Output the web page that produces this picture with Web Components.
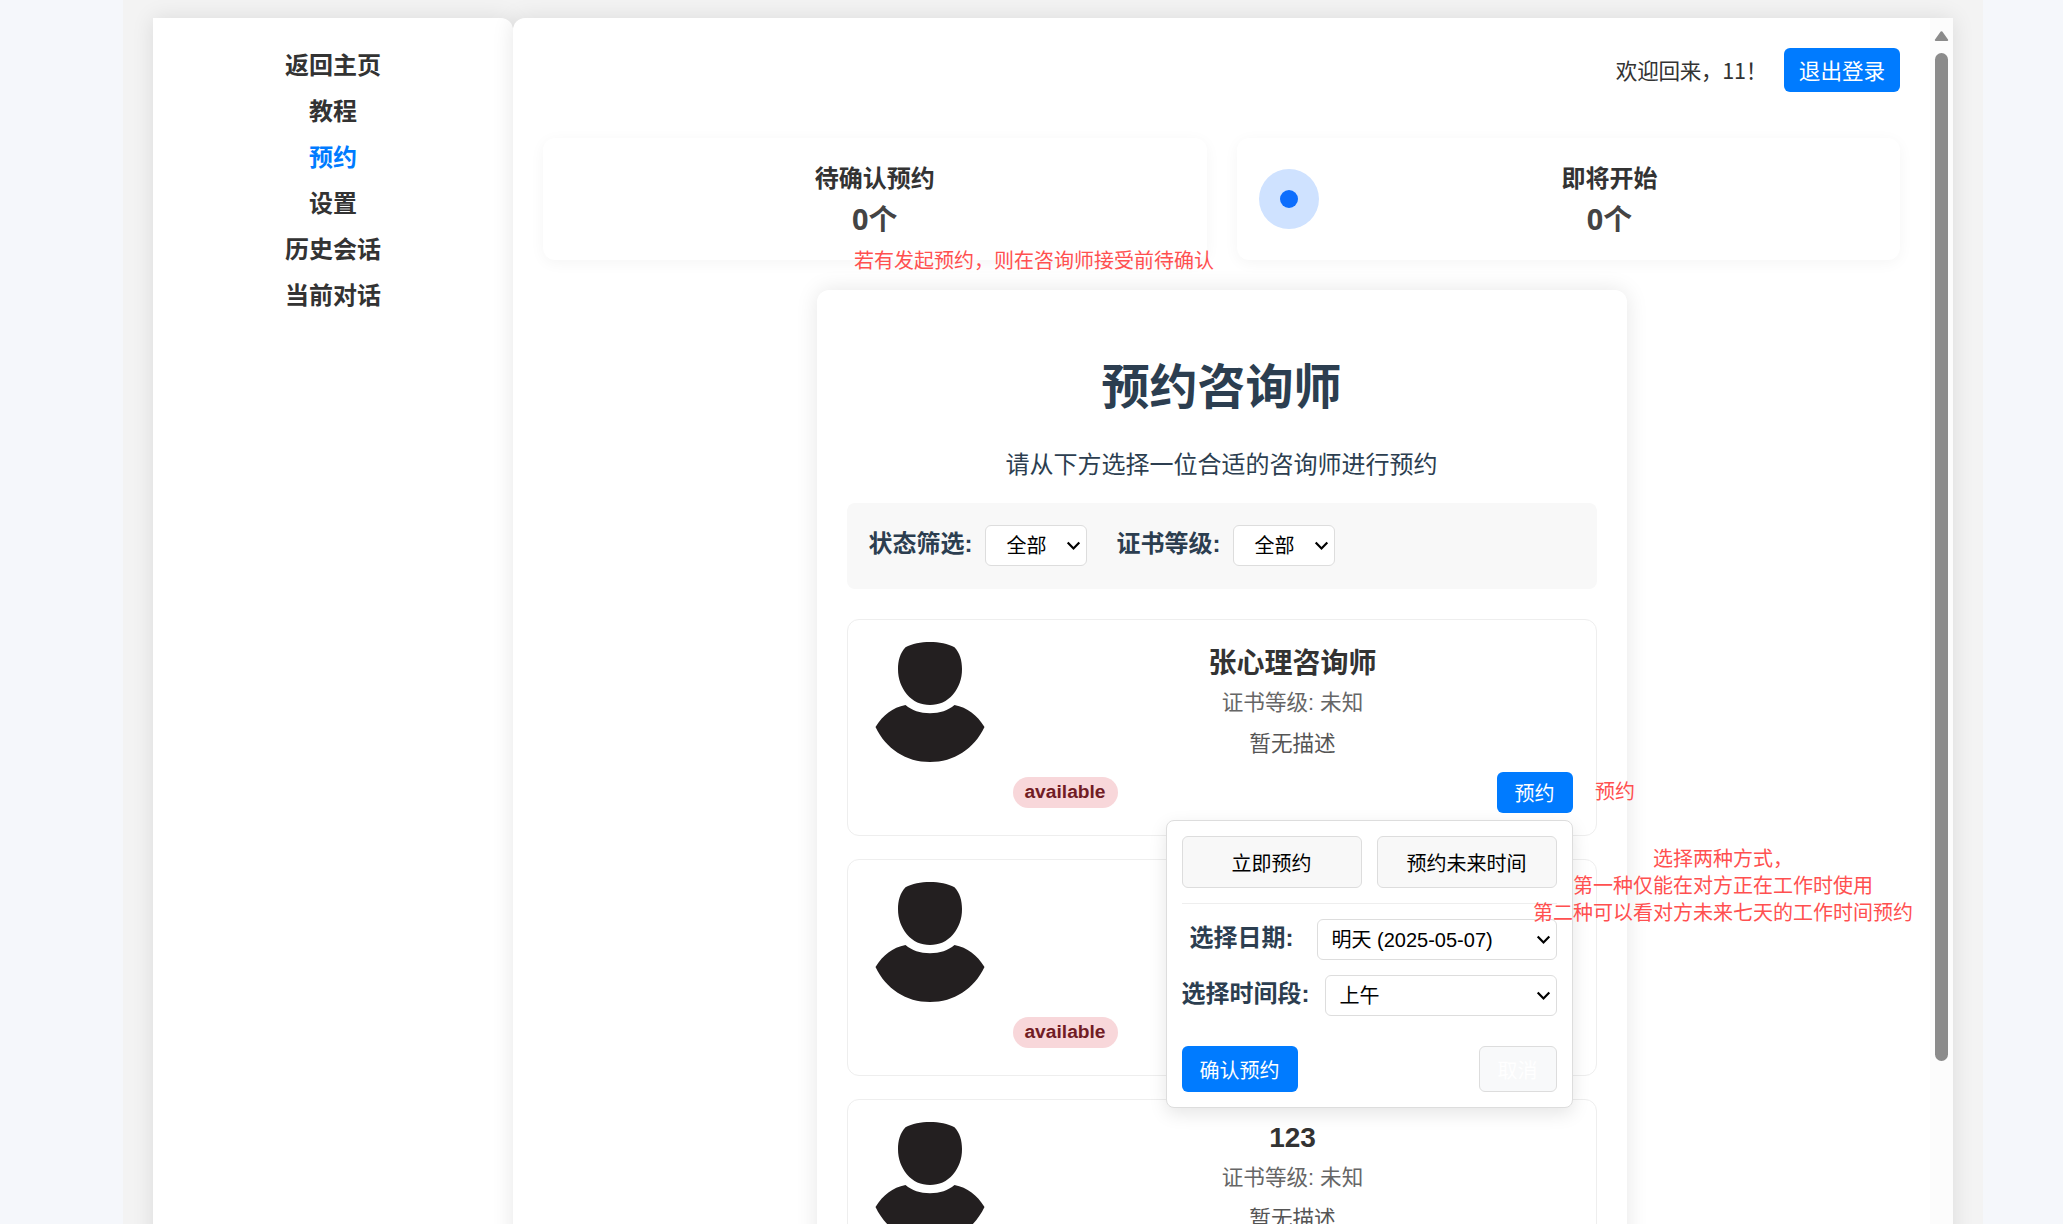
<!DOCTYPE html>
<html lang="zh-CN">
<head>
<meta charset="utf-8">
<title>预约咨询师</title>
<style>
html,body{margin:0;height:100%;overflow:hidden;background:#f5f7fb}
body{font-family:"Liberation Sans","Noto Sans CJK SC",sans-serif;color:#2c3e50}
</style>
</head>
<body>
<booking-app></booking-app>
<script>
function define(name, html) {
  const t = document.createElement('template');
  t.innerHTML = html;
  customElements.define(name, class extends HTMLElement {
    constructor() {
      super();
      this.attachShadow({mode: 'open'}).appendChild(t.content.cloneNode(true));
    }
  });
}

define('nav-item', `<style>
:host{display:block;height:46px;line-height:46px;font-size:24px;font-weight:700;color:#333;text-align:center}
:host([active]){color:#007bff}
</style><slot></slot>`);

define('side-nav', `<style>
:host{display:block;box-sizing:border-box;width:360px;flex:none;background:#fff;border-radius:0 12px 0 0;padding-top:24.5px;box-shadow:0 0 22px rgba(0,0,0,.1)}
</style>
<nav-item>返回主页</nav-item><nav-item>教程</nav-item><nav-item active>预约</nav-item>
<nav-item>设置</nav-item><nav-item>历史会话</nav-item><nav-item>当前对话</nav-item>`);

define('ui-button', `<style>
:host{display:flex;box-sizing:border-box;align-items:center;justify-content:center;width:var(--w,auto);height:var(--h,41px);border-radius:6px;background:#007bff;color:#fff;font-size:var(--fs,20px);line-height:1;white-space:nowrap;flex:none}
:host([plain]){background:#f8f8f8;color:#000;border:1px solid #ddd}
:host([ghost]){background:#f8f9fa;color:#fff;border:1px solid #ddd}
span{padding-top:3px}
</style><span><slot></slot></span>`);

define('ui-select', `<style>
:host{display:flex;box-sizing:border-box;align-items:center;justify-content:space-between;width:var(--w,102px);height:41px;border:1px solid #ddd;border-radius:6px;background:#fff;color:#000;font-size:20px;line-height:1;padding:0 5px 0 var(--pl,21px);flex:none;white-space:nowrap}
span{padding-top:1px}
svg{display:block;flex:none}
</style><span><slot></slot></span>
<svg width="15" height="15" viewBox="0 0 15 15"><path d="M1.7 4.5l5.8 6 5.8-6" fill="none" stroke="#000" stroke-width="2.2"/></svg>`);

define('welcome-bar', `<style>
:host{display:flex;justify-content:flex-end;align-items:center;height:44px;color:#333;font-size:21.6px}
.hi{margin-right:17px;white-space:nowrap;font-family:"Noto Sans CJK SC",sans-serif;line-height:44px;letter-spacing:-.3px}
ui-button{--w:116px;--h:44px;--fs:21.6px}
</style><span class="hi">欢迎回来，11！</span><ui-button>退出登录</ui-button>`);

define('stat-card', `<style>
:host{display:flex;align-items:center;box-sizing:border-box;flex:1;height:122px;padding:3px 22.5px 0;border-radius:12px;background:#fff;box-shadow:0 3px 15px rgba(0,0,0,.045)}
.text{flex:1;text-align:center;color:#333;font-family:"Open Sans","Noto Sans CJK SC",sans-serif;font-weight:700}
.t{font-size:24px;line-height:36px}
.n{font-size:28.8px;line-height:46px;color:#444}
</style><slot name="icon"></slot><div class="text"><div class="t"><slot name="title"></slot></div><div class="n"><slot></slot></div></div>`);

define('filter-bar', `<style>
:host{display:flex;align-items:flex-start;box-sizing:border-box;height:86px;padding:22px 22px 0;border-radius:8px;background:#f8f8f8}
b{font-size:24px;line-height:38px;width:116px;white-space:nowrap}
ui-select{margin-right:30px}
</style><b>状态筛选:</b><ui-select>全部</ui-select><b>证书等级:</b><ui-select>全部</ui-select>`);

define('avatar-icon', `<style>:host{display:block;width:120px;height:120px;flex:none}svg{display:block}</style>
<svg width="120" height="120" viewBox="0 0 120 120" fill="#231f20">
<path d="M35.500 5.300C42 1.800 51 0 60 0s18 1.800 24.500 5.300C90 11 92 19 92 27c0 10-3 18-9 25.500C77 59.500 69 63 60 63s-17-3.500-23-10.500C31 45 28 37 28 27c0-8 2-16 7.500-21.700z"/>
<path d="M35.500 63C42 68.500 50 71.200 60 71.200S78 68.500 84.500 63c13 2.500 22.500 10 30 22C104 107 84 120 60 120S16 107 5.500 85c7.500-12 17-19.500 30-22z"/></svg>`);

define('counselor-card', `<style>
:host{display:flex;box-sizing:border-box;height:217px;border:1px solid #eee;border-radius:12px;padding:22px 23px 22px 22px;background:#fff;position:relative}
.body{flex:1;margin-left:23px;display:flex;flex-direction:column}
.info{height:122px;text-align:center}
.foot{display:flex;justify-content:space-between;align-items:center;height:41px;margin-top:8px}
.badge{box-sizing:border-box;width:105px;height:31px;line-height:29px;border-radius:16px;background:#f8d7da;color:#721c24;font-size:19.2px;font-weight:700;text-align:center}
ui-button{--w:76px}
:host([covered]) ui-button{display:none}
</style>
<avatar-icon></avatar-icon>
<div class="body"><div class="info"><slot name="info"></slot></div>
<slot name="foot"><div class="foot"><span class="badge">available</span><ui-button>预约</ui-button></div></slot></div><slot name="popup"></slot>`);

define('counselor-info', `<style>
:host{display:block;text-align:center}
.name{font-size:28px;line-height:37px;padding-top:3px;font-weight:700;color:#333}
:host([latin]) .name{line-height:32px;padding:0 0 3px}
.cert,.desc{font-size:21.6px;line-height:41px;color:#666}
.desc{color:#555}
</style><div class="name"><slot></slot></div><div class="cert">证书等级: 未知</div><div class="desc">暂无描述</div>`);

define('booking-popup', `<style>
:host{display:block;position:absolute;z-index:5;top:200px;right:23px;box-sizing:border-box;width:407px;height:288px;background:#fff;border:1px solid #ddd;border-radius:8px;padding:15px;box-shadow:0 6px 18px rgba(0,0,0,.1)}
.modes{display:flex;gap:15px;padding-bottom:15px;border-bottom:1px solid #eee;margin-bottom:15px}
.modes ui-button{flex:1;--h:52px}
.row{display:flex;justify-content:space-between;align-items:flex-start;height:41px;margin-bottom:15px}
b{font-size:24px;line-height:38px;white-space:nowrap}
.date b{margin-left:8px}
.d{--w:240px;--pl:14px}.t{--w:232px;--pl:14px}
.act{display:flex;justify-content:space-between;margin-top:30px}
.act ui-button{--w:116px;--h:46px}.act ui-button[ghost]{--w:78px}
</style>
<div class="modes"><ui-button plain>立即预约</ui-button><ui-button plain>预约未来时间</ui-button></div>
<div class="row date"><b>选择日期:</b><ui-select class="d">明天 (2025-05-07)</ui-select></div>
<div class="row"><b>选择时间段:</b><ui-select class="t">上午</ui-select></div>
<div class="act"><ui-button>确认预约</ui-button><ui-button ghost>取消</ui-button></div>`);

define('counselor-panel', `<style>
:host{display:block;box-sizing:border-box;width:810px;height:1300px;margin:30px auto 0;padding:0 30px;border-radius:12px;background:#fff;box-shadow:0 0 22px rgba(0,0,0,.1)}
h1{margin:0;padding-top:62px;font-size:48px;line-height:72px;text-align:center}
p{margin:0;padding-top:22px;height:57px;font-size:24px;line-height:38px;text-align:center}
.list{display:flex;flex-direction:column;gap:23px;margin-top:30px}
</style>
<h1>预约咨询师</h1><p>请从下方选择一位合适的咨询师进行预约</p>
<filter-bar></filter-bar>
<div class="list">
<counselor-card><counselor-info slot="info">张心理咨询师</counselor-info><booking-popup slot="popup"></booking-popup></counselor-card>
<counselor-card covered></counselor-card>
<counselor-card><counselor-info slot="info" latin>123</counselor-info><span slot="foot"></span></counselor-card>
</div>`);

define('scroll-track', `<style>
:host{display:flex;flex-direction:column;align-items:center;width:23px;flex:none;background:#fcfcfc;padding-top:12px;box-sizing:border-box}
.thumb{width:13px;height:1008px;border-radius:7px;background:#8b8b8b;margin-top:11px}
svg{display:block}
</style><svg width="15" height="12" viewBox="0 0 15 12"><path d="M7.500 2.200L13.200 10H1.800z" fill="#8b8b8b" stroke="#8b8b8b" stroke-width="2" stroke-linejoin="round"/></svg><div class="thumb"></div>`);

define('red-note', `<style>
:host{position:absolute;z-index:10;font-family:"Noto Sans CJK SC",sans-serif;font-size:20px;line-height:27px;color:#ff5050;text-align:center;white-space:nowrap}
</style><slot></slot>`);

define('booking-app', `<style>
:host{display:block;box-sizing:border-box;width:1860px;height:1224px;margin:0 auto 0 123px;padding:18px 30px 0;background:#f3f3f3;overflow:hidden;position:relative}
.shell{display:flex;height:1300px}
main{flex:1;min-width:0;display:flex;background:#fff;border-radius:12px 0 0 0;box-shadow:0 0 22px rgba(0,0,0,.1)}
.content{flex:1;min-width:0;padding:30px 30px 0}
.stats{display:flex;gap:30px;margin-top:46px}
.dot{display:flex;align-items:center;justify-content:center;width:60px;height:60px;margin:-3px 22.5px 0 0;border-radius:50%;background:#cfe2ff}
.dot i{width:18px;height:18px;border-radius:50%;background:#0d6efd}
.n1{left:731px;top:246px}.n2{left:1472px;top:777px}.n3{left:1410px;top:844px}
</style>
<div class="shell"><side-nav></side-nav>
<main><div class="content"><welcome-bar></welcome-bar>
<div class="stats"><stat-card><span slot="title">待确认预约</span>0个</stat-card>
<stat-card><div class="dot" slot="icon"><i></i></div><span slot="title">即将开始</span>0个</stat-card></div>
<counselor-panel></counselor-panel></div><scroll-track></scroll-track></main></div>
<red-note class="n1">若有发起预约，则在咨询师接受前待确认</red-note>
<red-note class="n2">预约</red-note>
<red-note class="n3">选择两种方式，<br>第一种仅能在对方正在工作时使用<br>第二种可以看对方未来七天的工作时间预约</red-note>`);
</script>
</body>
</html>
